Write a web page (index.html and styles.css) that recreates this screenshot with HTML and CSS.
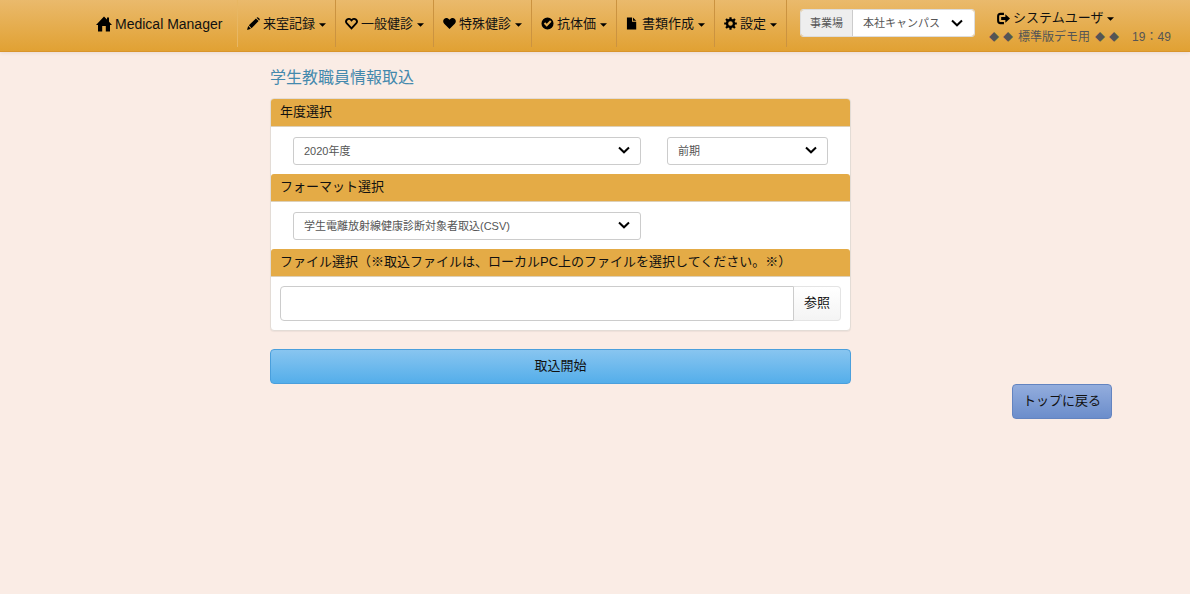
FILE: index.html
```
<!DOCTYPE html>
<html lang="ja">
<head>
<meta charset="utf-8">
<title>Medical Manager</title>
<link rel="stylesheet" href="styles.css">
</head>
<body>
<svg class="sprite" aria-hidden="true">
  <symbol id="chevron" viewBox="0 0 12 8"><path d="M1 1.5 6 6.3l5-4.8" fill="none" stroke="#000" stroke-width="2"/></symbol>
  <symbol id="caret" viewBox="0 0 8 4"><path d="M0 0h8L4 4z"/></symbol>
</svg>
<header class="navbar">
  <a class="brand" href="#"><svg class="icon-home" viewBox="0 0 16 16"><path d="M8 .5 11 3.6V1.5h2v4.2L16 9h-2v6.5H9.8V10H6.2v5.5H2V9H0z"/></svg>Medical Manager</a>
  <nav class="menu">
    <a class="menu-item" href="#"><svg class="icon" viewBox="0 0 14 14"><path d="M0 14 1.3 9.8l2.9 2.9zM2 9 9.6 1.5l2.9 2.9L4.9 12zM10.3.8Q11.3-.2 12.3.7l1 1q.9 1-.1 2z"/></svg><span>来室記録</span><svg class="caret"><use href="#caret"/></svg></a>
    <a class="menu-item" href="#"><svg class="icon" viewBox="0 0 14 14"><path d="M7 12.2 2 7C-.5 4 3.6-.4 7 3.6 10.4-.4 14.5 4 12 7z" fill="none" stroke="#000" stroke-width="2"/></svg><span>一般健診</span><svg class="caret"><use href="#caret"/></svg></a>
    <a class="menu-item" href="#"><svg class="icon" viewBox="0 0 14 14"><path d="M7 13 1.3 7.3C-2.2 3.2 3.4-1.6 7 2.9c3.6-4.5 9.2.3 5.7 4.4z"/></svg><span>特殊健診</span><svg class="caret"><use href="#caret"/></svg></a>
    <a class="menu-item" href="#"><svg class="icon" viewBox="0 0 14 14"><path fill-rule="evenodd" d="M7 .5a6.5 6.5 0 1 1 0 13 6.5 6.5 0 0 1 0-13zM3 7.2l3.2 3.3L11.3 5 9.8 3.5 6.2 7.3 4.5 5.7z"/></svg><span>抗体価</span><svg class="caret"><use href="#caret"/></svg></a>
    <a class="menu-item" href="#"><svg class="icon" viewBox="0 0 14 14"><path d="M1 .5h5.5V5H11v8.5H1zM7.5.5 11 4H7.5z"/></svg><span>書類作成</span><svg class="caret"><use href="#caret"/></svg></a>
    <a class="menu-item" href="#"><svg class="icon" viewBox="0 0 14 14"><circle cx="7" cy="7" r="3.8" fill="none" stroke="#000" stroke-width="2.6"/><path d="M7 .2v3M7 10.8v3M.2 7h3M10.8 7h3M2.2 2.2l2 2M9.8 9.8l2 2M2.2 11.8l2-2M9.8 4.2l2-2" stroke="#000" stroke-width="2.4"/></svg><span>設定</span><svg class="caret"><use href="#caret"/></svg></a>
  </nav>
  <div class="office">
    <label class="office-label" for="office">事業場</label>
    <div class="select-box office-select">
      <select id="office"><option>本社キャンパス</option></select>
      <svg class="chevron"><use href="#chevron"/></svg>
    </div>
  </div>
  <div class="account">
    <a class="user" href="#"><svg class="icon" viewBox="0 0 14 14"><path d="M7.5 2H3.7Q1.2 2 1.2 4.5v5Q1.2 12 3.7 12h3.8" fill="none" stroke="#000" stroke-width="2.2"/><path d="M4.5 5.5H9V2.5L14 7 9 11.5v-3H4.5z"/></svg><span>システムユーザ</span><svg class="caret"><use href="#caret"/></svg></a>
    <div class="status"><span class="mark">◆</span><span class="mark">◆</span><span class="edition">標準版デモ用</span><span class="mark">◆</span><span class="mark">◆</span><span class="clock">19：49</span></div>
  </div>
</header>
<main class="page">
  <form class="import">
    <h1 class="title">学生教職員情報取込</h1>
    <div class="panel">
      <h2 class="panel-head">年度選択</h2>
      <div class="panel-row">
        <div class="select-box">
          <select aria-label="年度"><option>2020年度</option></select>
          <svg class="chevron"><use href="#chevron"/></svg>
        </div>
        <div class="select-box">
          <select aria-label="期"><option>前期</option></select>
          <svg class="chevron"><use href="#chevron"/></svg>
        </div>
      </div>
      <h2 class="panel-head">フォーマット選択</h2>
      <div class="panel-row">
        <div class="select-box">
          <select aria-label="フォーマット"><option>学生電離放射線健康診断対象者取込(CSV)</option></select>
          <svg class="chevron"><use href="#chevron"/></svg>
        </div>
      </div>
      <h2 class="panel-head">ファイル選択（※取込ファイルは、ローカルPC上のファイルを選択してください。※）</h2>
      <div class="file-row">
        <input class="file-name" type="text" aria-label="ファイル選択">
        <button class="browse" type="button">参照</button>
      </div>
    </div>
    <button class="start" type="button">取込開始</button>
  </form>
  <button class="back" type="button">トップに戻る</button>
</main>
</body>
</html>
```
FILE: styles.css
```
* { box-sizing: border-box; }
body {
  margin: 0;
  min-height: 100vh;
  background: #faece5;
  color: #111;
  font: 13px/20px "Liberation Sans", "Noto Sans CJK JP", sans-serif;
}
a { color: #111; text-decoration: none; }
button, input, select { font: inherit; color: inherit; }
svg { flex: none; }
.sprite { display: none; }
.icon { width: 13px; height: 13px; }
.caret { width: 7px; height: 4px; margin-top: 2px; }

.navbar {
  display: flex;
  align-items: flex-start;
  height: 52px;
  padding-left: 96px;
  white-space: nowrap;
  background: linear-gradient(#eaba6c, #e1a133);
  border-bottom: 1px solid #d9952b;
  box-shadow: 0 1px 4px rgba(0, 0, 0, .08);
}
.brand {
  display: flex;
  align-items: center;
  gap: 3px;
  width: 141px;
  height: 47px;
  font-size: 14px;
}
.icon-home { width: 16px; height: 16px; }
.menu { display: flex; border-left: 1px solid #e8b764; }
.menu-item {
  display: flex;
  align-items: center;
  gap: 3px;
  height: 47px;
  padding: 0 9px;
  border-right: 1px solid #cb9340;
}
.menu-item .caret { margin-left: 1px; }
.office { display: flex; margin: 9px 0 0 13px; border: 1px solid #ddd; border-radius: 3px; }
.office-label {
  padding: 3px 9px;
  font-size: 11px;
  color: #555;
  background: #eee;
  border-right: 1px solid #ccc;
  border-radius: 3px 0 0 3px;
}
.office-select { width: 121px; }
.office-select select { height: 26px; border: 0; border-radius: 0 3px 3px 0; }
.account { margin: 9px 0 0 14px; line-height: 18px; }
.user { display: flex; align-items: center; gap: 3px; padding-left: 8px; }
.user .caret { margin-left: 1px; }
.status { display: flex; gap: 4px; padding-top: 1px; color: #555; font-size: 12px; }
.mark { font-family: "Noto Sans CJK JP", sans-serif; font-size: 10px; }
.edition { margin: 0 1px; }
.clock { margin-left: 9px; }

.select-box { position: relative; }
select {
  display: block;
  width: 100%;
  height: 28px;
  padding: 0 30px 0 10px;
  appearance: none;
  font-size: 11px;
  color: #555;
  background: #fff;
  border: 1px solid #ccc;
  border-radius: 3px;
}
.chevron { position: absolute; right: 11px; top: 9px; width: 12px; height: 8px; pointer-events: none; }

.page { display: grid; grid-template-columns: 270fr 581fr 339fr; }
.import { grid-column: 2; }
.title { margin: 16px 0 10px; font-size: 16px; line-height: 20px; font-weight: 400; color: #4489ad; }
.panel {
  background: #fff;
  border: 1px solid #e3dcd6;
  border-radius: 4px;
  box-shadow: 0 1px 1px rgba(0, 0, 0, .05);
}
.panel-head {
  height: 28px;
  margin: 0;
  padding: 0 9px;
  font-size: 13px;
  line-height: 26px;
  font-weight: 400;
  white-space: nowrap;
  background: #e4ab46;
  border-bottom: 1px solid #ddd0b8;
  border-radius: 3px 3px 0 0;
}
.panel-row { display: grid; grid-template-columns: 348fr 161fr; gap: 26px; padding: 10px 22px 9px; }
.file-row { display: flex; padding: 9px; }
.file-name {
  flex: 1;
  min-width: 0;
  height: 35px;
  padding: 0 10px;
  background: #fff;
  border: 1px solid #ccc;
  border-radius: 4px 0 0 4px;
}
.browse {
  padding: 0 10px 2px;
  background: linear-gradient(#fff, #f4f4f4);
  border: 1px solid #e4e4e4;
  border-left: 0;
  border-radius: 0 4px 4px 0;
}
.start {
  display: block;
  width: 100%;
  height: 35px;
  margin-top: 18px;
  padding: 0 0 2px;
  background: linear-gradient(#88c5f0, #54aeea);
  border: 1px solid #4a9fdc;
  border-radius: 4px;
}
.back {
  grid-column: 3;
  grid-row: 2;
  justify-self: end;
  height: 35px;
  margin-right: 78px;
  padding: 0 10px 2px;
  background: linear-gradient(#93addd, #6b8dcb);
  border: 1px solid #6384c0;
  border-radius: 4px;
}
```
